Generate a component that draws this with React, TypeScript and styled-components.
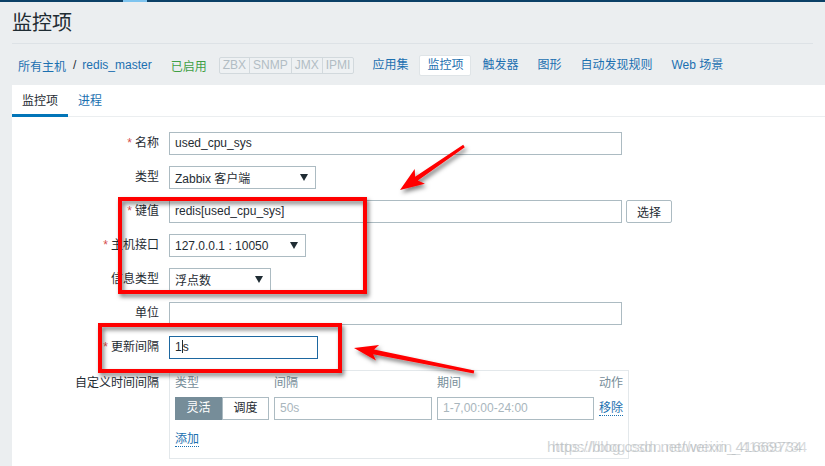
import React from 'react';
import styled, { createGlobalStyle } from 'styled-components';

const GlobalStyle = createGlobalStyle`
  html, body {
    margin: 0;
    padding: 0;
  }
  body {
    background: #ebeef0;
    font-family: "Liberation Sans", Arial, "Noto Sans CJK SC", sans-serif;
    font-size: 12px;
    color: #1f2c33;
  }
`;

const LINK = '#1b70b0';
const BORDER = '#acbbc2';

const Page = styled.div`
  position: relative;
  width: 825px;
  height: 466px;
  overflow: hidden;
  display: flex;
  flex-direction: column;
`;

const TopBar = styled.div`
  height: 2px;
  flex: none;
  background: linear-gradient(
    to right,
    #0b4167 123px,
    #7ec4ef 123px,
    #7ec4ef 147px,
    #0b4167 147px
  );
`;

const Header = styled.header`
  padding: 0 12px;
  flex: none;
`;

const Title = styled.h1`
  margin: 0;
  font-size: 20px;
  font-weight: normal;
  line-height: 41px;
  padding-top: 1px;
  height: 40px;
  color: #1f2c33;
  border-bottom: 1px solid #dde2e6;
`;

const NavRow = styled.nav`
  display: flex;
  align-items: center;
  height: 40px;
  padding: 1px 0 0 6px;
`;

const Crumb = styled.a`
  color: ${LINK};
  text-decoration: none;
`;

const Slash = styled.span`
  margin: 0 6px 0 7px;
  color: #1f2c33;
`;

const Enabled = styled.span`
  color: #3f9f45;
  margin-left: 19px;
`;

const StatusGroup = styled.div`
  display: flex;
  margin: 0 10px 0 12px;
  border: 1px solid #d2d9dd;
  border-radius: 2px;
  background: #eef1f3;
`;

const StatusTag = styled.span`
  padding: 0 3px;
  line-height: 15px;
  color: #b2bdc4;
  & + & {
    border-left: 1px solid #d2d9dd;
  }
`;

const NavTabs = styled.div`
  display: flex;
  gap: 3px;
`;

const NavTab = styled.a<{ $active?: boolean }>`
  padding: 0 7px;
  line-height: 19px;
  color: ${LINK};
  text-decoration: none;
  border: 1px solid ${p => (p.$active ? '#dfe4e7' : 'transparent')};
  background: ${p => (p.$active ? '#fff' : 'transparent')};
  border-radius: 2px;
`;

const Panel = styled.main`
  flex: 1;
  margin-left: 12px;
  background: #fff;
  display: flex;
  flex-direction: column;
`;

const TabBar = styled.div`
  display: flex;
  height: 32px;
  box-sizing: border-box;
  box-shadow: inset 0 -1px 0 #ebeef0;
`;

const Tab = styled.a<{ $active?: boolean }>`
  padding: 3px 10px 0;
  line-height: 26px;
  text-decoration: none;
  color: ${p => (p.$active ? '#1f2c33' : LINK)};
  border-bottom: 3px solid ${p => (p.$active ? '#0275b8' : 'transparent')};
`;

const Form = styled.div`
  display: grid;
  grid-template-columns: 147px 1fr;
  column-gap: 10px;
  row-gap: 11px;
  padding-top: 15px;
`;

const Label = styled.label<{ $top?: boolean }>`
  text-align: right;
  line-height: ${p => (p.$top ? '14px' : '23px')};
  padding-top: ${p => (p.$top ? '6px' : '0')};
  white-space: nowrap;
`;

const Req = styled.span`
  color: #d64e4e;
  margin-right: 3px;
`;

const Field = styled.div`
  display: flex;
  gap: 4px;
  align-items: center;
`;

const Input = styled.div<{ $w: number; $focus?: boolean; $muted?: boolean }>`
  box-sizing: border-box;
  width: ${p => p.$w}px;
  height: 23px;
  line-height: 21px;
  padding: 0 5px;
  border: 1px solid ${p => (p.$focus ? '#1d67a0' : BORDER)};
  background: #fff;
  color: ${p => (p.$muted ? '#a9b6bd' : '#1f2c33')};
  white-space: nowrap;
  overflow: hidden;
`;

const Caret = styled.span`
  display: inline-block;
  width: 1px;
  height: 13px;
  background: #1f2c33;
  vertical-align: -2px;
`;

const Select = styled.div<{ $w: number }>`
  box-sizing: border-box;
  width: ${p => p.$w}px;
  height: 23px;
  padding: 0 7px 0 5px;
  border: 1px solid ${BORDER};
  display: flex;
  align-items: center;
  justify-content: space-between;
  white-space: nowrap;
`;

const Arrow = styled.span`
  width: 0;
  height: 0;
  border-left: 4px solid transparent;
  border-right: 4px solid transparent;
  border-top: 7px solid #1f2c33;
`;

const Button = styled.button`
  box-sizing: border-box;
  width: 46px;
  height: 23px;
  padding: 0;
  border: 1px solid ${BORDER};
  border-radius: 2px;
  background: #fff;
  color: #1f2c33;
  font: inherit;
`;

const CustomBox = styled.div`
  box-sizing: border-box;
  width: 460px;
  border: 1px solid #e3e8eb;
  padding: 5px 5px 11px;
`;

const IntervalTable = styled.div`
  display: grid;
  grid-template-columns: 94px 158px 157px 1fr;
  column-gap: 5px;
  row-gap: 7px;
  align-items: center;
`;

const ColHead = styled.span<{ $right?: boolean }>`
  color: #768d99;
  line-height: 14px;
  text-align: ${p => (p.$right ? 'right' : 'left')};
`;

const Segmented = styled.div`
  display: flex;
`;

const Segment = styled.span<{ $active?: boolean }>`
  box-sizing: border-box;
  width: 47px;
  height: 23px;
  line-height: 21px;
  text-align: center;
  border: 1px solid ${p => (p.$active ? '#768d99' : BORDER)};
  background: ${p => (p.$active ? '#768d99' : '#fff')};
  color: ${p => (p.$active ? '#fff' : '#1f2c33')};
`;

const DottedLink = styled.a`
  justify-self: start;
  align-self: center;
  color: ${LINK};
  text-decoration: none;
  line-height: 14px;
  border-bottom: 1px dotted ${LINK};
`;

const AddRow = styled.div`
  margin-top: 12px;
  display: flex;
`;

const Watermark = styled.div`
  position: absolute;
  left: 547px;
  top: 438px;
  font-size: 15px;
  line-height: 18px;
  color: rgba(170, 176, 180, 0.55);
  text-shadow: 5px 0 rgba(170, 176, 180, 0.45);
  white-space: nowrap;
  pointer-events: none;
`;

const Overlay = styled.svg`
  position: absolute;
  left: 0;
  top: 0;
  pointer-events: none;
`;

type Pt = [number, number];

function arrowPoints(tail: Pt, tip: Pt, headLen: number, headHalf: number): string {
  const dx = tip[0] - tail[0];
  const dy = tip[1] - tail[1];
  const len = Math.hypot(dx, dy);
  const ux = dx / len;
  const uy = dy / len;
  const nx = -uy;
  const ny = ux;
  const bx = tip[0] - ux * headLen;
  const by = tip[1] - uy * headLen;
  const nb = (k: number): Pt => [bx + ux * 4 + nx * k, by + uy * 4 + ny * k];
  const pts: Pt[] = [
    [tail[0] + nx * 1.4, tail[1] + ny * 1.4],
    nb(2.4),
    [bx + nx * headHalf, by + ny * headHalf],
    tip,
    [bx - nx * headHalf, by - ny * headHalf],
    nb(-2.4),
    [tail[0] - nx * 1.4, tail[1] - ny * 1.4],
  ];
  return pts.map(p => `${p[0].toFixed(1)},${p[1].toFixed(1)}`).join(' ');
}

const Annotations = () => (
  <Overlay width={825} height={466} viewBox="0 0 825 466">
    <defs>
      <filter id="shadow" x="-20%" y="-20%" width="140%" height="140%">
        <feDropShadow dx="2" dy="3" stdDeviation="2.2" floodColor="#000" floodOpacity="0.5" />
      </filter>
    </defs>
    <g filter="url(#shadow)">
      <rect x={120} y={199} width={245} height={93} fill="none" stroke="#ff0000" strokeWidth={4} />
      <rect x={100} y={325} width={240} height={46} fill="none" stroke="#ff0000" strokeWidth={4} />
      <polygon points={arrowPoints([464, 146], [400, 190], 24, 9)} fill="#ff0000" />
      <polygon points={arrowPoints([474, 372], [354, 348], 24, 8)} fill="#ff0000" />
    </g>
  </Overlay>
);

const navItems = ['应用集', '监控项', '触发器', '图形', '自动发现规则', 'Web 场景'];

export default function App() {
  return (
    <>
      <GlobalStyle />
      <Page>
        <TopBar />
        <Header>
          <Title>监控项</Title>
          <NavRow>
            <Crumb href="#">所有主机</Crumb>
            <Slash>/</Slash>
            <Crumb href="#">redis_master</Crumb>
            <Enabled>已启用</Enabled>
            <StatusGroup>
              {['ZBX', 'SNMP', 'JMX', 'IPMI'].map(s => (
                <StatusTag key={s}>{s}</StatusTag>
              ))}
            </StatusGroup>
            <NavTabs>
              {navItems.map(n => (
                <NavTab key={n} href="#" $active={n === '监控项'}>
                  {n}
                </NavTab>
              ))}
            </NavTabs>
          </NavRow>
        </Header>
        <Panel>
          <TabBar>
            <Tab $active>监控项</Tab>
            <Tab href="#">进程</Tab>
          </TabBar>
          <Form>
            <Label><Req>*</Req>名称</Label>
            <Field><Input $w={453}>used_cpu_sys</Input></Field>

            <Label>类型</Label>
            <Field><Select $w={147}>Zabbix 客户端<Arrow /></Select></Field>

            <Label><Req>*</Req>键值</Label>
            <Field>
              <Input $w={453}>redis[used_cpu_sys]</Input>
              <Button>选择</Button>
            </Field>

            <Label><Req>*</Req>主机接口</Label>
            <Field><Select $w={137}>127.0.0.1 : 10050<Arrow /></Select></Field>

            <Label>信息类型</Label>
            <Field><Select $w={102}>浮点数<Arrow /></Select></Field>

            <Label>单位</Label>
            <Field><Input $w={453} /></Field>

            <Label><Req>*</Req>更新间隔</Label>
            <Field><Input $w={149} $focus>1<Caret />s</Input></Field>

            <Label $top>自定义时间间隔</Label>
            <div>
              <CustomBox>
                <IntervalTable>
                  <ColHead>类型</ColHead>
                  <ColHead>间隔</ColHead>
                  <ColHead>期间</ColHead>
                  <ColHead $right>动作</ColHead>
                  <Segmented>
                    <Segment $active>灵活</Segment>
                    <Segment>调度</Segment>
                  </Segmented>
                  <Input $w={158} $muted>50s</Input>
                  <Input $w={157} $muted>1-7,00:00-24:00</Input>
                  <DottedLink href="#">移除</DottedLink>
                </IntervalTable>
                <AddRow>
                  <DottedLink href="#">添加</DottedLink>
                </AddRow>
              </CustomBox>
            </div>
          </Form>
        </Panel>
        <Annotations />
        <Watermark>https://blog.csdn.net/weixin_41669734</Watermark>
      </Page>
    </>
  );
}
